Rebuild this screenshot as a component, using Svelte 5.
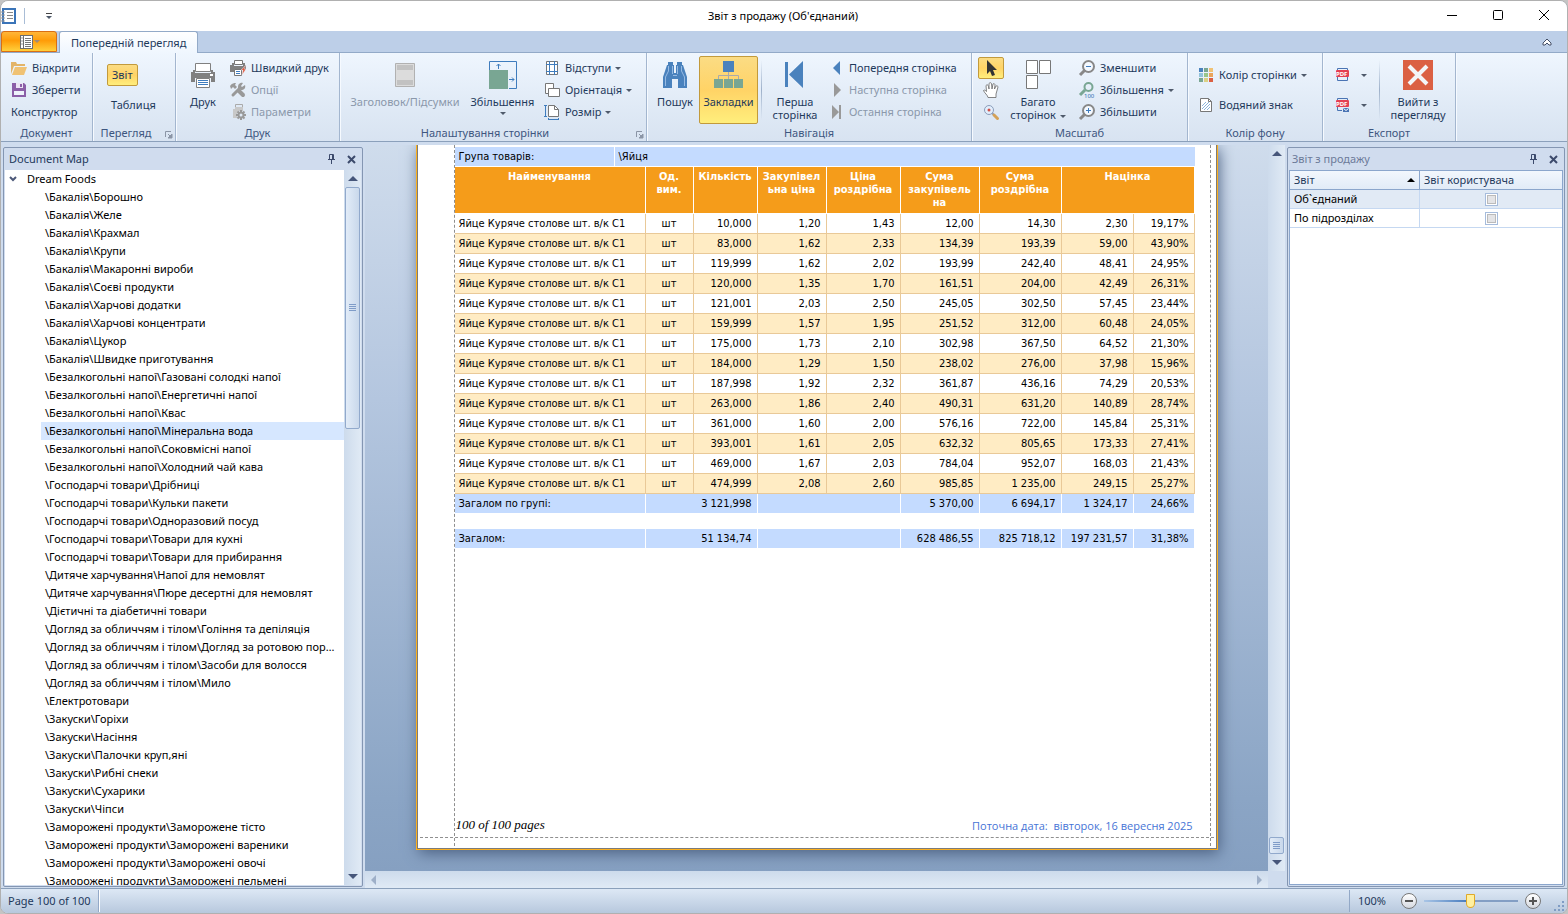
<script lang="ts">
  type Row = { unit: string; values: string[] };

  const tree = [
    'Бакалія\\Борошно', 'Бакалія\\Желе', 'Бакалія\\Крахмал', 'Бакалія\\Крупи',
    'Бакалія\\Макаронні вироби', 'Бакалія\\Соєві продукти', 'Бакалія\\Харчові додатки',
    'Бакалія\\Харчові концентрати', 'Бакалія\\Цукор', 'Бакалія\\Швидке приготування',
    'Безалкогольні напої\\Газовані солодкі напої', 'Безалкогольні напої\\Енергетичні напої',
    'Безалкогольні напої\\Квас', 'Безалкогольні напої\\Мінеральна вода',
    'Безалкогольні напої\\Соковмісні напої', 'Безалкогольні напої\\Холодний чай кава',
    'Господарчі товари\\Дрібниці', 'Господарчі товари\\Кульки пакети',
    'Господарчі товари\\Одноразовий посуд', 'Господарчі товари\\Товари для кухні',
    'Господарчі товари\\Товари для прибирання', 'Дитяче харчування\\Напої для немовлят',
    'Дитяче харчування\\Пюре десертні для немовлят', 'Дієтичні та діабетичні товари',
    'Догляд за обличчям і тілом\\Гоління та депіляція',
    'Догляд за обличчям і тілом\\Догляд за ротовою порожниною',
    'Догляд за обличчям і тілом\\Засоби для волосся', 'Догляд за обличчям і тілом\\Мило',
    'Електротовари', 'Закуски\\Горіхи', 'Закуски\\Насіння', 'Закуски\\Палочки круп,яні',
    'Закуски\\Рибні снеки', 'Закуски\\Сухарики', 'Закуски\\Чіпси',
    'Заморожені продукти\\Заморожене тісто', 'Заморожені продукти\\Заморожені вареники',
    'Заморожені продукти\\Заморожені овочі', 'Заморожені продукти\\Заморожені пельмені'
  ];

  const columns = [191, 48, 64, 69, 74, 79, 82, 72, 61];

  const rows: Row[] = [
    '10,000|1,20|1,43|12,00|14,30|2,30|19,17%',
    '83,000|1,62|2,33|134,39|193,39|59,00|43,90%',
    '119,999|1,62|2,02|193,99|242,40|48,41|24,95%',
    '120,000|1,35|1,70|161,51|204,00|42,49|26,31%',
    '121,001|2,03|2,50|245,05|302,50|57,45|23,44%',
    '159,999|1,57|1,95|251,52|312,00|60,48|24,05%',
    '175,000|1,73|2,10|302,98|367,50|64,52|21,30%',
    '184,000|1,29|1,50|238,02|276,00|37,98|15,96%',
    '187,998|1,92|2,32|361,87|436,16|74,29|20,53%',
    '263,000|1,86|2,40|490,31|631,20|140,89|28,74%',
    '361,000|1,60|2,00|576,16|722,00|145,84|25,31%',
    '393,001|1,61|2,05|632,32|805,65|173,33|27,41%',
    '469,000|1,67|2,03|784,04|952,07|168,03|21,43%',
    '474,999|2,08|2,60|985,85|1 235,00|249,15|25,27%'
  ].map((line) => ({ unit: 'шт', values: line.split('|') }));

  const reports = ['Об`єднаний', 'По підрозділах'];

  let selected = $state(13);
  let expanded = $state(true);
  let bookmarks = $state(true);
  let zoom = $state(49);
</script>

{#snippet icon(name: string, size = 16)}
  <svg class="icon" width={size} height={size} viewBox="0 0 {size} {size}" fill="none" aria-hidden="true">
    {#if name === 'app'}
      <rect x="2" y="1" width="12" height="14" fill="#fff" stroke="#3a74b8" stroke-width="2" />
      <path d="M0 4h4M0 7h4M0 10h4M0 13h4" stroke="#999" />
      <path d="M6 4.500h6M6 7.500h6M6 10.500h6" stroke="#888" />
    {:else if name === 'file'}
      <rect x="2.500" y="1.500" width="12" height="13" fill="#fff" stroke="#6d6d6d" />
      <path d="M5.500 2v12" stroke="#6d6d6d" />
      <path d="M3 4h2M3 7h2M3 10h2" stroke="#999" />
      <path d="M7 4.500h6M7 6.500h6M7 8.500h6M7 10.500h6M7 12.500h6" stroke="#777" />
    {:else if name === 'open'}
      <path d="M0 14V2h5l1 2h8v2H3L0 14Z" fill="#e3b468" />
      <path d="M4 7h12l-3 8H1l3-8Z" fill="#f0c274" />
    {:else if name === 'save'}
      <path d="M1 1h12l2 2v12H1Z" fill="#8b5fa8" />
      <path d="M5 1h7v5H5Z" fill="#ece4f4" /><path d="M9 2h2v3H9Z" fill="#8b5fa8" />
      <path d="M3 9h10v4H3Z" fill="#eef3fb" />
    {:else if name === 'print'}
      <path d="M6.500 2.500h15v8h-15Z" fill="#fff" stroke="#808080" />
      <path d="M4 9h2v3h16V9h2v2h2v10H2V11h2Z" fill="#808080" />
      <path d="M21 13h3v2h-3Z" fill="#fff" />
      <path d="M6 17h16v4H6Z" fill="#eef4fb" />
      <path d="M7.500 17.500h13v9h-13Z" fill="#fff" stroke="#808080" />
      <path d="M9 19.500h10M9 21.500h10M9 23.500h10" stroke="#3f7cbd" />
    {:else if name === 'quick'}
      <path d="M4.500.500h8v4h-8Z" fill="#fff" stroke="#777" />
      <path d="M2 3h2v3h9V3h2v2h1v4h-4v3H0V5h2Z" fill="#808080" />
      <path d="M4.500 9.500h7v6h-7Z" fill="#fff" stroke="#777" /><path d="M6 11.500h4M6 13.500h4" stroke="#3f7cbd" />
      <path d="m16 5-5 5h2l-1 5 4-6h-2l2-4Z" fill="#e0583c" stroke="#eef4fc" stroke-width=".4" />
    {:else if name === 'tools'}
      <path d="m3 13 7-7" stroke="#999" stroke-width="3" stroke-linecap="round" />
      <path d="M9 2c2-2 4-1 4-1l-2 3 1 1 3-2c1 3-1 5-4 5L8 6c0-2 0-3 1-4Z" fill="#999" />
      <path d="M0 4c2-3 4-3 6-3L5 3l2 2-2 2-2-2-2 2Z" fill="#999" />
      <path d="m9 9 4 4" stroke="#999" stroke-width="4" stroke-linecap="round" />
    {:else if name === 'params'}
      <path d="M5 3h8v4H9l-2 3v4H3V5h2Z" fill="#c8c8c8" /><path d="M5.500 3V.500h7V3" stroke="#aaa" />
      <circle cx="11" cy="11" r="2.500" stroke="#999" stroke-width="2" />
      <path d="M11 6v2M11 14v2M6 11h2M14 11h2M7.500 7.500l1.500 1.500M13 13l1.500 1.500M14.500 7.500 13 9M9 13l-1.500 1.500" stroke="#999" stroke-width="2" />
    {:else if name === 'header'}
      <path d="M4.500 2.500h19v23h-19Z" fill="#dcdcdc" stroke="#b1b1b1" />
      <path d="M6 4h16v5H6ZM6 19h16v5H6Z" fill="#c2c2c2" />
    {:else if name === 'scale'}
      <path d="M.500 9V.500h27v27H20" stroke="#3f7cbd" /><path d="M0 9h19v19H0Z" fill="#79a693" />
      <path d="M9.500 3v5M7.500 5l2-2 2 2M20 18.500h5M23 16.500l2 2-2 2" stroke="#3f7cbd" />
    {:else if name === 'margins'}
      <path d="M2.500 1.500h11v13h-11Z" fill="#fff" stroke="#777" />
      <path d="M5.500 1v14M10.500 1v14M2 4.500h12M2 11.500h12" stroke="#3f7cbd" />
    {:else if name === 'orient'}
      <path d="M1.500 1.500h8v10h-8Z" fill="#fff" stroke="#777" /><path d="M4.500 6.500h11v8h-11Z" fill="#fff" stroke="#777" />
    {:else if name === 'size'}
      <path d="M4.500 1.500h6l4 4v7h-10Z" fill="#fff" stroke="#777" /><path d="M10.500 1.500v4h4" stroke="#777" />
      <path d="M1.500 1v12M0 1.500h3M0 12.500h3M5 15.500h9M4.500 14v2M14.500 14v2" stroke="#3f7cbd" />
    {:else if name === 'find'}
      <path d="M7 1h5v3h1v8h2V4h1V1h5v3h1l4 12v11h-9v-9h-6v9H2V16L6 4h1Z" fill="#4a82bd" />
      <path d="M7.500 5v5l-3 6v9M12 14.500h4M20.500 5v5l3 6v9M11.500 5v8M16.500 5v8" stroke="#a9c9ec" stroke-width=".8" />
    {:else if name === 'map'}
      <path d="M9 0h11v11H9Z" fill="#4a82bd" /><path d="M14.500 11v7M4.500 18v-3.500h20V18" stroke="#aaa" />
      <path d="M0 18h9v9H0ZM10 18h9v9h-9ZM20 18h9v9h-9Z" fill="#79a693" />
    {:else if name === 'first'}
      <path d="M4 1h3v25H4ZM22 0v27L8 13.500Z" fill="#4a82bd" />
    {:else if name === 'prev'}
      <path d="M10 1v14L3 8Z" fill="#4a82bd" />
    {:else if name === 'next'}
      <path d="M4 1v14l7-7Z" fill="#999" />
    {:else if name === 'last'}
      <path d="M2 1v14l7-7ZM9 1h2v14H9Z" fill="#999" />
    {:else if name === 'arrow'}
      <path d="M4 0v14l3-3 2 5 3-1-2-5h4Z" fill="#333" />
    {:else if name === 'hand'}
      <path d="M5 15.500c0-2-4-5-4.500-7 1-1 2 0 3 1L3 3.500c1-1 2-1 2.500 1L6 7 6 1.500c1-1 2-1 2.500 0L9 7l1-5c1-1 2 0 2 1l-.500 4L13 4c1-.500 2 0 2 1l-2 7v3.500Z" fill="#fff" stroke="#666" stroke-width=".8" />
    {:else if name === 'lens'}
      <path d="m9 9 2 2" stroke="#8b9dbb" stroke-width="2" /><path d="m11 11 3.500 3.500" stroke="#d4a158" stroke-width="3" stroke-linecap="round" />
      <circle cx="6" cy="6" r="4.500" fill="#e2eefc" stroke="#8b9dbb" /><circle cx="6" cy="6" r="1.500" fill="#d05048" />
    {:else if name === 'pages'}
      <path d="M2.500.500h11v13h-11ZM15.500.500h11v13h-11ZM2.500 15.500h11v13h-11Z" fill="#fff" stroke="#777" />
    {:else if name === 'zoomout' || name === 'zoomin'}
      <circle cx="9.500" cy="6.500" r="5.500" fill="#f4f9ff" stroke="#888" stroke-width="2" />
      <path d="m1 15 5-5" stroke="#888" stroke-width="3" /><path d="M7 6.500h5" stroke="#3f7cbd" />
      {#if name === 'zoomin'}<path d="M9.500 4v5" stroke="#3f7cbd" />{/if}
    {:else if name === 'zoom100'}
      <circle cx="9.500" cy="5" r="4" stroke="#79a693" stroke-width="2" /><path d="m1 13 5-5" stroke="#79a693" stroke-width="3" />
      <text x="5" y="16" font-size="6" fill="#2c6cb0">100</text>
    {:else if name === 'palette'}
      <path d="M1 1h4v4H1Z" fill="#4a82bd" /><path d="M6 1h4v4H6ZM1 11h4v4H1Z" fill="#79a693" />
      <path d="M11 1h4v4h-4Z" fill="#f0c274" /><path d="M1 6h4v4H1Z" fill="#92c3dc" /><path d="M6 6h4v4H6Z" fill="#98c68a" />
      <path d="M11 6h4v4h-4Z" fill="#e9a45c" /><path d="M6 11h4v4H6Z" fill="#dbd184" /><path d="M11 11h4v4h-4Z" fill="#db6043" />
    {:else if name === 'watermark'}
      <path d="M2.500 1.500h8l3 3v10h-11Z" fill="#fff" stroke="#777" /><path d="M10.500 1.500v3h3" stroke="#777" />
      <path d="m4 9 4-4M4 12l7-7M6 13l6-6M9 13l3-3" stroke="#8bb4dc" />
    {:else if name === 'pdf' || name === 'pdfmail'}
      <path d="M2.500 4V1.500h10V4" stroke="#4a74b4" />
      <rect x="1" y="3" width="13" height="7" rx="1" fill="#e43f52" />
      <text x="1" y="9" font-size="6" font-weight="700" fill="#fff">PDF</text>
      {#if name === 'pdf'}
        <path d="M2.500 10v3.500h10V10" stroke="#4a74b4" />
      {:else}
        <path d="M2.500 10v3.500H7" stroke="#4a74b4" /><path d="M8 11h6v4H8Z" fill="#4a74b4" /><path d="m8.500 11.500 2.500 2 2.500-2" stroke="#fff" />
      {/if}
    {:else if name === 'exit'}
      <path d="M0 0h30v30H0Z" fill="#db6043" /><path d="m6 6 18 18M24 6 6 24" stroke="#f3f5f8" stroke-width="4" />
    {:else if name === 'pin'}
      <path d="M5.500 8V3.500h4V8M4 8.500h7M7.500 9v4M8.500 4v4" stroke="#3c4a6c" />
    {:else if name === 'close'}
      <path d="m5 5 7 7M12 5l-7 7" stroke="#3c4a6c" stroke-width="2" />
    {:else if name === 'collapse'}
      <path d="m4 9 4-4 4 4v2h-2L8 9l-2 2H4Z" fill="#fff" stroke="#444f66" />
    {:else if name === 'launcher'}
      <path d="M1.500 7V1.500H7" stroke="#8b95a6" /><path d="M4 4l4 4M8 4v4H4Z" fill="#8b95a6" stroke="#8b95a6" />
    {/if}
  </svg>
{/snippet}

{#snippet small(label: string, name = '', drop = false, disabled = false)}
  <button class="small" {disabled}>
    {#if name}{@render icon(name)}{/if}
    <span>{label}</span>
    {#if drop}<i class="drop"></i>{/if}
  </button>
{/snippet}

{#snippet panelTools()}
  <button class="tool" aria-label="Pin">{@render icon('pin')}</button>
  <button class="tool" aria-label="Close">{@render icon('close')}</button>
{/snippet}

<div class="window">
  <header class="titlebar">
    <span class="app-icon">{@render icon('app')}</span>
    <button class="quick-menu" aria-label="Quick access"><i class="bar"></i><i class="drop"></i></button>
    <h1>Звіт з продажу (Об'єднаний)</h1>
    <div class="window-buttons">
      <button aria-label="Minimize"><svg width="12" height="12"><path d="M1 6.500h10" stroke="#000" /></svg></button>
      <button aria-label="Maximize"><svg width="12" height="12"><rect x="1.500" y="1.500" width="9" height="9" rx="1" fill="none" stroke="#000" /></svg></button>
      <button aria-label="Close window"><svg width="12" height="12"><path d="m1 1 10 10M11 1 1 11" stroke="#000" /></svg></button>
    </div>
  </header>

  <nav class="tabs">
    <button class="file" aria-label="File">{@render icon('file')}<i class="drop"></i></button>
    <button class="tab">Попередній перегляд</button>
    <button class="collapse" aria-label="Collapse ribbon">{@render icon('collapse')}</button>
  </nav>

  <div class="ribbon">
    <section class="group document">
      <div class="items">
        <div class="stack">
          {@render small('Відкрити', 'open')}
          {@render small('Зберегти', 'save')}
          {@render small('Конструктор')}
        </div>
      </div>
      <h2>Документ</h2>
    </section>

    <section class="group view">
      <div class="items">
        <div class="stack two">
          <button class="small checked">Звіт</button>
          <button class="small table-button">Таблиця</button>
        </div>
      </div>
      <h2>Перегляд</h2>
      <button class="launcher" aria-label="View options">{@render icon('launcher', 9)}</button>
    </section>

    <section class="group printing">
      <div class="items">
        <button class="big">{@render icon('print', 28)}<span>Друк</span></button>
        <div class="stack">
          {@render small('Швидкий друк', 'quick')}
          {@render small('Опції', 'tools', false, true)}
          {@render small('Параметри', 'params', false, true)}
        </div>
      </div>
      <h2>Друк</h2>
    </section>

    <section class="group setup">
      <div class="items">
        <button class="big wide" disabled>{@render icon('header', 28)}<span>Заголовок/Підсумки</span></button>
        <button class="big scale">{@render icon('scale', 28)}<span>Збільшення</span><i class="drop"></i></button>
        <div class="stack">
          {@render small('Відступи', 'margins', true)}
          {@render small('Орієнтація', 'orient', true)}
          {@render small('Розмір', 'size', true)}
        </div>
      </div>
      <h2>Налаштування сторінки</h2>
      <button class="launcher" aria-label="Page setup">{@render icon('launcher', 9)}</button>
    </section>

    <section class="group navigation">
      <div class="items">
        <button class="big search">{@render icon('find', 28)}<span>Пошук</span></button>
        <button class="big marks" class:checked={bookmarks} onclick={() => (bookmarks = !bookmarks)}>{@render icon('map', 29)}<span>Закладки</span></button>
        <i class="separator"></i>
        <button class="big first">{@render icon('first', 28)}<span>Перша<br />сторінка</span></button>
        <div class="stack tight">
          {@render small('Попередня сторінка', 'prev')}
          {@render small('Наступна сторінка', 'next', false, true)}
          {@render small('Остання сторінка', 'last', false, true)}
        </div>
      </div>
      <h2>Навігація</h2>
    </section>

    <section class="group zooming">
      <div class="items">
        <div class="stack pointers">
          <button class="small checked" aria-label="Pointer">{@render icon('arrow')}</button>
          <button class="small" aria-label="Hand">{@render icon('hand')}</button>
          <button class="small" aria-label="Magnifier">{@render icon('lens')}</button>
        </div>
        <button class="big many">{@render icon('pages', 29)}<span>Багато<br />сторінок <i class="drop"></i></span></button>
        <div class="stack">
          {@render small('Зменшити', 'zoomout')}
          {@render small('Збільшення', 'zoom100', true)}
          {@render small('Збільшити', 'zoomin')}
        </div>
      </div>
      <h2>Масштаб</h2>
    </section>

    <section class="group background">
      <div class="items">
        <div class="stack two">
          {@render small('Колір сторінки', 'palette', true)}
          {@render small('Водяний знак', 'watermark')}
        </div>
      </div>
      <h2>Колір фону</h2>
    </section>

    <section class="group export">
      <div class="items">
        <div class="stack two">
          <button class="small pdf" aria-label="Export">{@render icon('pdf')}<i class="drop"></i></button>
          <button class="small pdf" aria-label="Send">{@render icon('pdfmail')}<i class="drop"></i></button>
        </div>
        <i class="separator"></i>
        <button class="big exit">{@render icon('exit', 30)}<span>Вийти з<br />перегляду</span></button>
      </div>
      <h2>Експорт</h2>
    </section>
  </div>

  <main>
    <aside class="panel map">
      <div class="panel-title"><h2>Document Map</h2>{@render panelTools()}</div>
      <div class="tree-area">
        <div class="tree">
          <button class="root" onclick={() => (expanded = !expanded)}>
            <svg width="8" height="6"><path d="m1 1 3 3 3-3" fill="none" stroke="#4c5878" stroke-width="2" /></svg>Dream Foods
          </button>
          {#if expanded}
            <ul>
              {#each tree as item, i}
                <li><button class:selected={i === selected} onclick={() => (selected = i)}>\{item}</button></li>
              {/each}
            </ul>
          {/if}
        </div>
        <div class="scroll">
          <i class="up"></i>
          <div class="track"><div class="thumb long"><i class="grip"></i></div></div>
          <i class="down"></i>
        </div>
      </div>
    </aside>

    <div class="viewer">
      <div class="canvas">
        <article class="page">
          <table class="group-line">
            <tbody><tr><th>Група товарів:</th><td>\Яйця</td></tr></tbody>
          </table>
          <table class="report">
            <colgroup>
              {#each columns as width}<col style="width: {width}px" />{/each}
            </colgroup>
            <thead>
              <tr>
                <th>Найменування</th><th>Од.<br />вим.</th><th>Кількість</th>
                <th>Закупівел<br />ьна ціна</th><th>Ціна<br />роздрібна</th>
                <th>Сума<br />закупівель<br />на</th><th>Сума<br />роздрібна</th>
                <th colspan="2">Націнка</th>
              </tr>
            </thead>
            <tbody>
              {#each rows as row}
                <tr>
                  <td>Яйце Куряче столове шт. в/к С1</td>
                  <td>{row.unit}</td>
                  {#each row.values as value}<td>{value}</td>{/each}
                </tr>
              {/each}
            </tbody>
            <tbody class="total">
              <tr><td>Загалом по групі:</td><td colspan="2">3 121,998</td><td colspan="2"></td><td>5 370,00</td><td>6 694,17</td><td>1 324,17</td><td>24,66%</td></tr>
              <tr class="gap"><td colspan="9"></td></tr>
              <tr><td>Загалом:</td><td colspan="2">51 134,74</td><td colspan="2"></td><td>628 486,55</td><td>825 718,12</td><td>197 231,57</td><td>31,38%</td></tr>
            </tbody>
          </table>
          <footer>
            <em>100 of 100 pages</em>
            <span>Поточна дата:&nbsp; вівторок, 16 вересня 2025</span>
          </footer>
          <i class="guide left"></i><i class="guide right"></i><i class="guide bottom"></i>
        </article>
      </div>
      <div class="scroll">
        <i class="up"></i>
        <div class="track end"><div class="thumb short"><i class="grip"></i></div></div>
        <i class="down"></i>
      </div>
      <div class="hscroll"><i></i><i class="forward"></i></div>
    </div>

    <aside class="panel reports">
      <div class="panel-title muted"><h2>Звіт з продажу</h2>{@render panelTools()}</div>
      <div class="grid-box">
        <table class="list">
          <thead><tr><th>Звіт<i class="sort"></i></th><th>Звіт користувача</th></tr></thead>
          <tbody>
            {#each reports as report, i}
              <tr class:current={i === 0}>
                <td>{report}</td>
                <td><input type="checkbox" aria-label={report} /></td>
              </tr>
            {/each}
          </tbody>
        </table>
      </div>
    </aside>
  </main>

  <footer class="status">
    <span class="pages">Page 100 of 100</span>
    <span class="percent">100%</span>
    <button class="round" aria-label="Zoom out"><svg width="16" height="16"><path d="M4 8h8" stroke="#555" stroke-width="2" /></svg></button>
    <input type="range" min="0" max="100" bind:value={zoom} aria-label="Zoom" />
    <button class="round" aria-label="Zoom in"><svg width="16" height="16"><path d="M4 8h8M8 4v8" stroke="#555" stroke-width="2" /></svg></button>
    <svg class="resize" width="12" height="12"><path d="M9 1h2M9 5h2M9 9h2M5 5h2M5 9h2M1 9h2" stroke="#7f9cc4" stroke-width="2" /></svg>
  </footer>
</div>

<style>
  :global(body) {
    margin: 0;
    background: #c4c4c4;
  }

  .window {
    display: flex;
    flex-direction: column;
    height: 100vh;
    box-sizing: border-box;
    border: 1px solid #b0b0b0;
    border-radius: 8px;
    overflow: hidden;
    background: #cfdcee;
    color: #1e395b;
    font: 11px/14px "Noto Sans", "Open Sans", sans-serif;
  }

  button {
    padding: 0;
    border: 0;
    background: none;
    color: inherit;
    font: inherit;
  }

  h1,
  h2 {
    margin: 0;
    font: inherit;
  }

  .icon {
    flex: none;
    display: block;
    overflow: visible;
  }

  .drop {
    display: inline-block;
    flex: none;
    border: 3px solid transparent;
    border-top-color: #4f5a6b;
    border-bottom: 0;
  }

  .titlebar {
    display: flex;
    align-items: center;
    height: 30px;
    flex: none;
    background: #fff;
    color: #000;
  }

  .app-icon {
    width: 23px;
    border-right: 1px solid #a9bdd6;
  }

  .quick-menu {
    display: flex;
    flex-direction: column;
    align-items: center;
    gap: 2px;
    width: 48px;
  }

  .bar {
    width: 6px;
    height: 1px;
    background: #444;
  }

  h1 {
    flex: 1;
    padding-left: 64px;
    text-align: center;
  }

  .window-buttons {
    display: flex;
  }

  .window-buttons button {
    width: 46px;
    height: 28px;
  }

  .tabs {
    display: flex;
    align-items: flex-end;
    gap: 2px;
    height: 22px;
    flex: none;
    box-sizing: border-box;
    border-bottom: 1px solid #93aac8;
    background: #bdcfe8;
  }

  .file {
    display: flex;
    align-items: center;
    justify-content: center;
    box-sizing: border-box;
    width: 56px;
    height: 21px;
    border: 1px solid #d96f14;
    border-radius: 3px 3px 0 0;
    background: linear-gradient(#ffb63a, #ff9c08 45%, #ffd03c);
  }

  .file .drop {
    border-top-color: #a08b78;
  }

  .tab {
    box-sizing: border-box;
    height: 22px;
    margin-bottom: -1px;
    padding: 0 11px;
    border: 1px solid #93aac8;
    border-bottom: 0;
    border-radius: 3px 3px 0 0;
    background: linear-gradient(#fff, #eff6fe);
  }

  .collapse {
    margin: 0 12px 2px auto;
  }

  .ribbon {
    display: flex;
    flex: none;
    height: 88px;
    border-bottom: 1px solid #8ba0bb;
    background: linear-gradient(#eff6fe, #e0eaf6 60%, #d8e3f1);
  }

  .group {
    position: relative;
    display: flex;
    flex-direction: column;
    box-sizing: border-box;
    border-right: 1px solid #a3b6cf;
    box-shadow: 1px 0 #f6faff;
  }

  .items {
    display: flex;
    height: 68px;
    padding-top: 3px;
  }

  .group h2 {
    height: 17px;
    text-align: center;
    color: #3e5680;
    line-height: 17px;
  }

  .document { width: 92px; }
  .view { width: 83px; }
  .printing { width: 164px; }
  .setup { width: 307px; }
  .navigation { width: 325px; }
  .zooming { width: 216px; }
  .background { width: 135px; }
  .export { width: 133px; }

  .document .items,
  .background .items {
    padding-left: 10px;
  }

  .view .items {
    padding-left: 14px;
  }

  .view h2,
  .setup h2 {
    padding-right: 16px;
  }

  .stack {
    display: flex;
    flex-direction: column;
    justify-content: center;
    align-items: flex-start;
  }

  .stack.two {
    gap: 8px;
  }

  .small {
    display: flex;
    align-items: center;
    gap: 5px;
    box-sizing: border-box;
    height: 22px;
    white-space: nowrap;
  }

  .tight .small {
    gap: 3px;
  }

  .small .drop {
    margin-left: -1px;
  }

  button:disabled {
    color: #8b98ab;
  }

  .view .small {
    padding: 0 4px;
  }

  .checked {
    border: 1px solid #c29a3c;
    border-radius: 2px;
    background: linear-gradient(#fbdc84, #ffd366 50%, #ffee7c);
  }

  .big {
    display: flex;
    flex-direction: column;
    align-items: center;
    box-sizing: border-box;
    width: 54px;
    height: 68px;
    padding-top: 5px;
    line-height: 13px;
  }

  .big .icon {
    margin-bottom: auto;
  }

  .big span {
    height: 29px;
    white-space: nowrap;
  }

  .big span .drop {
    vertical-align: middle;
    margin-left: 1px;
  }

  .big.wide {
    width: 130px;
  }

  .big.scale {
    width: 65px;
    margin-right: 9px;
  }

  .big.scale span {
    height: 17px;
  }

  .big.scale > .drop {
    margin-bottom: 9px;
  }

  .big.marks {
    width: 59px;
  }

  .big.marks.checked {
    padding-top: 4px;
  }

  .big.marks.checked span {
    height: 28px;
  }

  .big.first {
    width: 60px;
    margin-right: 5px;
  }

  .big.search {
    width: 52px;
    padding-left: 4px;
  }

  .pointers {
    padding-left: 6px;
  }

  .pointers .small {
    justify-content: center;
    width: 26px;
  }

  .big.many {
    width: 68px;
    padding-top: 4px;
    margin-right: 7px;
  }

  .pdf {
    width: 42px;
    gap: 11px;
    padding-left: 1px;
  }

  .export .items {
    padding-left: 11px;
  }

  .export .separator {
    margin-left: 3px;
    margin-right: 2px;
  }

  .big.exit {
    width: 72px;
    padding-top: 4px;
  }

  .separator {
    width: 1px;
    margin: 4px 3px;
    background: linear-gradient(transparent, #9eb1ca 50%, transparent);
  }

  .launcher {
    position: absolute;
    right: 2px;
    bottom: 2px;
  }

  main {
    display: flex;
    flex: 1;
    min-height: 0;
    padding: 0 2px;
    border-bottom: 1px solid #8ba0bb;
  }

  .panel {
    display: flex;
    flex-direction: column;
    flex: none;
    box-sizing: border-box;
    margin: 5px 0 1px;
    padding: 0 1px 1px;
    border: 1px solid #8496b2;
    border-radius: 2px;
    background: #d0dcee;
  }

  .map {
    width: 360px;
  }

  .reports {
    width: 278px;
    margin-left: 2px;
  }

  .panel-title {
    display: flex;
    align-items: center;
    height: 22px;
    padding: 0 2px 0 4px;
  }

  .reports .panel-title {
    padding-left: 3px;
  }

  .panel-title h2 {
    flex: 1;
  }

  .muted h2 {
    color: #6c7a99;
  }

  .tool {
    margin-left: 3px;
  }

  .tree-area {
    display: flex;
    flex: 1;
    min-height: 0;
  }

  .tree {
    flex: 1;
    min-width: 0;
    overflow: hidden;
    background: #fff;
    color: #000;
  }

  .root {
    display: flex;
    align-items: center;
    gap: 10px;
    height: 18px;
    padding-left: 4px;
  }

  ul {
    margin: 0;
    padding: 0 0 0 36px;
    list-style: none;
  }

  li button {
    display: block;
    width: 100%;
    height: 18px;
    padding: 0 6px 0 4px;
    overflow: hidden;
    text-align: left;
    text-overflow: ellipsis;
    white-space: nowrap;
  }

  li .selected {
    background: #d6e7ff;
  }

  .scroll {
    display: flex;
    flex-direction: column;
    align-items: center;
    box-sizing: border-box;
    width: 17px;
    padding: 6px 1px;
    background: linear-gradient(90deg, #cddbec, #e0eaf5);
  }

  .up,
  .down {
    border: 5px solid transparent;
    border-bottom-color: #46567a;
    border-top: 0;
  }

  .down {
    border-top: 5px solid #46567a;
    border-bottom: 0;
  }

  .track {
    display: flex;
    flex: 1;
    width: 100%;
    padding: 6px 0;
  }

  .track.end {
    align-items: flex-end;
  }

  .thumb {
    display: flex;
    align-items: center;
    justify-content: center;
    box-sizing: border-box;
    width: 100%;
    border: 1px solid #91a9cc;
    border-radius: 2px;
    background: linear-gradient(90deg, #e2ecf8, #c9d8eb);
  }

  .thumb.long {
    height: 35.5%;
  }

  .thumb.short {
    height: 17px;
  }

  .grip {
    width: 7px;
    height: 7px;
    background: repeating-linear-gradient(#7f9cc8 0 1px, transparent 1px 2px);
  }

  .viewer {
    display: grid;
    grid-template: 1fr 17px / 1fr 17px;
    flex: 1;
    min-width: 0;
    margin: 3px 0 0 2px;
  }

  .canvas {
    display: flex;
    justify-content: center;
    min-width: 0;
    overflow: hidden;
    padding-bottom: 22px;
    background: linear-gradient(#cfdcec, #c3d2e6 16%, #b4c6df 35%, #8ba5c5 90%, #86a0c1);
  }

  .page {
    position: relative;
    display: flex;
    flex-direction: column;
    flex: none;
    box-sizing: border-box;
    width: 800px;
    padding: 2px 21px 15px 37px;
    border: 1px solid #7b7b7b;
    border-top: 0;
    background: #fff;
    box-shadow: 0 0 0 1px #fdb01c, 2px 4px 14px #4a5f80;
    color: #000;
    font: 11px/13px "DejaVu Sans Condensed", "DejaVu Sans", sans-serif;
  }

  .page table {
    width: 100%;
    border-collapse: separate;
    border-spacing: 0;
    table-layout: fixed;
  }

  .page th,
  .page td {
    box-sizing: border-box;
  }

  .group-line th,
  .group-line td {
    height: 20px;
    padding: 0 4px;
    border-bottom: 1px solid #fff;
    background: #c4dbff;
    font-weight: 400;
    text-align: left;
  }

  .group-line th {
    width: 160px;
    border-right: 1px solid #fff;
  }

  .report thead th {
    height: 47px;
    padding: 3px 0;
    border-right: 1px solid #fff;
    border-bottom: 1px solid #fff;
    background: #f59c1a;
    color: #fff;
    vertical-align: top;
    white-space: nowrap;
  }

  .report td {
    height: 20px;
    padding: 0 5px 0 4px;
    border-right: 1px solid #e9c998;
    border-bottom: 1px solid #e9c998;
    text-align: right;
    white-space: nowrap;
  }

  .report td:first-child {
    text-align: left;
  }

  .report tbody:not(.total) td:nth-child(2) {
    padding: 0;
    text-align: center;
  }

  .report tbody:not(.total) tr:nth-child(even) {
    background: #ffecc4;
  }

  .report .total td {
    border-color: #fff;
    background: #c4dbff;
  }

  .report .total .gap td {
    height: 15px;
    background: #fff;
  }

  .page footer {
    display: flex;
    align-items: center;
    justify-content: space-between;
    margin-top: auto;
    padding: 0 2px 0 1px;
  }

  em {
    font: italic 13px/16px "Liberation Serif", serif;
  }

  .page footer span {
    color: #4674d6;
    font-family: "Open Sans", "Noto Sans", sans-serif;
  }

  .guide {
    position: absolute;
    top: 0;
    bottom: 2px;
    border-left: 1px dashed #8f8f8f;
  }

  .guide.left {
    left: 36px;
  }

  .guide.right {
    right: 5px;
  }

  .guide.bottom {
    top: auto;
    right: 2px;
    bottom: 10px;
    left: 2px;
    border-left: 0;
    border-top: 1px dashed #8f8f8f;
  }

  .hscroll {
    display: flex;
    align-items: center;
    justify-content: space-between;
    padding: 0 6px;
    background: linear-gradient(#cddbec, #e0eaf5);
  }

  .hscroll i {
    border: 5px solid transparent;
    border-right-color: #9eafc8;
    border-left: 0;
  }

  .hscroll .forward {
    border-left: 5px solid #9eafc8;
    border-right: 0;
  }

  .grid-box {
    flex: 1;
    border: 1px solid #8ba6cc;
    background: #fff;
  }

  .list {
    width: 100%;
    border-collapse: separate;
    border-spacing: 0;
    table-layout: fixed;
  }

  .list th,
  .list td {
    box-sizing: border-box;
    height: 19px;
    padding: 0 4px;
    border-right: 1px solid #c5d8f1;
    border-bottom: 1px solid #c5d8f1;
    font-weight: 400;
    text-align: left;
  }

  .list th {
    border-color: #8ba6cc;
    background: linear-gradient(#f2f7fd, #e1ebf7);
  }

  .list th:first-child {
    width: 130px;
  }

  .list th:last-child,
  .list td:last-child {
    border-right: 0;
  }

  .list td {
    color: #000;
  }

  .list td:last-child {
    text-align: center;
  }

  .current {
    background: #e1eaf5;
  }

  .sort {
    float: right;
    margin-top: 5px;
    border: 4px solid transparent;
    border-top: 0;
    border-bottom-color: #000;
  }

  .list input {
    appearance: none;
    display: block;
    box-sizing: border-box;
    width: 13px;
    height: 13px;
    margin: 0 auto;
    border: 1px solid #a6bcdc;
    background: #e4e4e6;
    box-shadow: inset 0 0 0 1px #fff, inset 0 0 0 2px #bbb;
  }

  .status {
    display: flex;
    align-items: center;
    flex: none;
    height: 24px;
    padding: 0 2px 0 7px;
    background: linear-gradient(#dde8f5, #b7c8dd);
  }

  .pages {
    padding: 4px 7px 4px 0;
    border-right: 1px solid #93a9c7;
    box-shadow: 1px 0 #fff;
  }

  .percent {
    margin-left: auto;
    padding: 4px 15px 4px 8px;
    border-left: 1px solid #93a9c7;
  }

  .round {
    box-sizing: border-box;
    width: 16px;
    height: 16px;
    border: 1px solid #777;
    border-radius: 50%;
    background: linear-gradient(#fff, #d5d9e0);
  }

  .round svg {
    display: block;
    margin: -1px;
  }

  .status input {
    appearance: none;
    width: 94px;
    height: 16px;
    margin: 0 7px;
    background: linear-gradient(90deg, #a9c5e6, #4379bd 48%, #839ec4 50%) center / 100% 2px no-repeat;
  }

  .status input::-webkit-slider-thumb {
    appearance: none;
    width: 9px;
    height: 14px;
    border: 1px solid #dfa92a;
    border-radius: 1px 1px 5px 5px;
    background: #fff0a0;
  }

  .resize {
    align-self: flex-end;
    margin-left: 12px;
  }
</style>
